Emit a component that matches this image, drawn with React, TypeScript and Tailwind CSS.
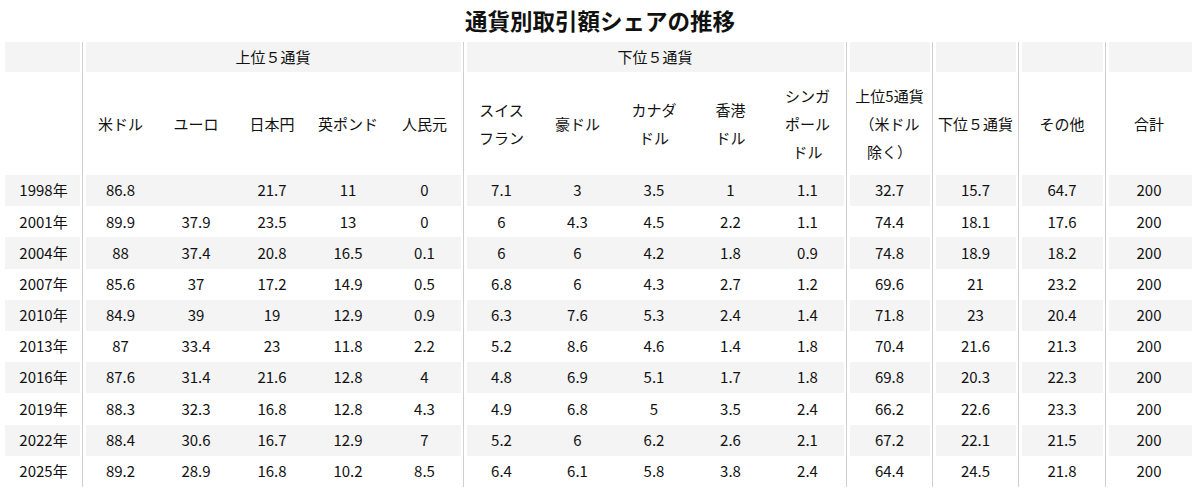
type Row = { year: string; values: string[] }

const rows: Row[] = [
  { year: "1998年", values: ["86.8", "", "21.7", "11", "0", "7.1", "3", "3.5", "1", "1.1", "32.7", "15.7", "64.7", "200"] },
  { year: "2001年", values: ["89.9", "37.9", "23.5", "13", "0", "6", "4.3", "4.5", "2.2", "1.1", "74.4", "18.1", "17.6", "200"] },
  { year: "2004年", values: ["88", "37.4", "20.8", "16.5", "0.1", "6", "6", "4.2", "1.8", "0.9", "74.8", "18.9", "18.2", "200"] },
  { year: "2007年", values: ["85.6", "37", "17.2", "14.9", "0.5", "6.8", "6", "4.3", "2.7", "1.2", "69.6", "21", "23.2", "200"] },
  { year: "2010年", values: ["84.9", "39", "19", "12.9", "0.9", "6.3", "7.6", "5.3", "2.4", "1.4", "71.8", "23", "20.4", "200"] },
  { year: "2013年", values: ["87", "33.4", "23", "11.8", "2.2", "5.2", "8.6", "4.6", "1.4", "1.8", "70.4", "21.6", "21.3", "200"] },
  { year: "2016年", values: ["87.6", "31.4", "21.6", "12.8", "4", "4.8", "6.9", "5.1", "1.7", "1.8", "69.8", "20.3", "22.3", "200"] },
  { year: "2019年", values: ["88.3", "32.3", "16.8", "12.8", "4.3", "4.9", "6.8", "5", "3.5", "2.4", "66.2", "22.6", "23.3", "200"] },
  { year: "2022年", values: ["88.4", "30.6", "16.7", "12.9", "7", "5.2", "6", "6.2", "2.6", "2.1", "67.2", "22.1", "21.5", "200"] },
  { year: "2025年", values: ["89.2", "28.9", "16.8", "10.2", "8.5", "6.4", "6.1", "5.8", "3.8", "2.4", "64.4", "24.5", "21.8", "200"] },
]

// column index (0 = year) -> whether a divider line sits on its left
const lineLeft = [false, true, false, false, false, false, true, false, false, false, false, true, true, true, true]
// column index -> whether a divider line sits on its right
const lineRight = [true, false, false, false, false, true, false, false, false, false, true, true, true, true, false]

const widths = [77, 76, 76, 76, 76, 77, 76, 77, 76, 77, 77, 86, 86, 87, 87]

function cellClass(col: number, shaded: boolean) {
  let c = "p-0 text-center"
  if (lineLeft[col]) c += " border-l border-[#cfcfcf]"
  if (shaded) {
    c += " bg-[#f4f4f4]"
    if (lineLeft[col] && lineRight[col]) c += " shadow-[inset_3px_0_0_#fff,inset_-2px_0_0_#fff]"
    else if (lineLeft[col]) c += " shadow-[inset_3px_0_0_#fff]"
    else if (lineRight[col]) c += " shadow-[inset_-2px_0_0_#fff]"
  }
  return c
}

const subHeaders: React.ReactNode[] = [
  "米ドル",
  "ユーロ",
  "日本円",
  "英ポンド",
  "人民元",
  <>スイス<br />フラン</>,
  "豪ドル",
  <>カナダ<br />ドル</>,
  <>香港<br />ドル</>,
  <>シンガ<br />ポール<br />ドル</>,
  <>上位5通貨<br />（米ドル<br />除く）</>,
  "下位５通貨",
  "その他",
  "合計",
]

export default function App() {
  return (
    <div className="w-[1200px] h-[501px] bg-white text-[#111] font-['Noto_Sans_CJK_JP','Noto_Sans',sans-serif] overflow-hidden">
      <div className="h-[42px] flex items-center justify-center text-[22.5px] font-bold">
        通貨別取引額シェアの推移
      </div>

      <table className="ml-[5px] w-[1187px] table-fixed border-separate border-spacing-0 text-[15px]">
        <colgroup>
          {widths.map((w, i) => (
            <col key={i} style={{ width: w }} />
          ))}
        </colgroup>
        <thead>
          <tr className="h-[30px]">
            <td className={cellClass(0, true)} />
            <td colSpan={5} className="p-0 text-center font-normal border-l border-[#cfcfcf] bg-[#f4f4f4] shadow-[inset_3px_0_0_#fff,inset_-2px_0_0_#fff]">
              上位５通貨
            </td>
            <td colSpan={5} className="p-0 text-center font-normal border-l border-[#cfcfcf] bg-[#f4f4f4] shadow-[inset_3px_0_0_#fff,inset_-2px_0_0_#fff]">
              下位５通貨
            </td>
            <td className={cellClass(11, true)} />
            <td className={cellClass(12, true)} />
            <td className={cellClass(13, true)} />
            <td className={cellClass(14, true)} />
          </tr>
          <tr className="h-[103px] leading-[28px]">
            <td className={cellClass(0, false)} />
            {subHeaders.map((h, i) => (
              <td key={i} className={cellClass(i + 1, false)}>
                {h}
              </td>
            ))}
          </tr>
        </thead>
        <tbody>
          {rows.map((r, ri) => {
            const shaded = ri % 2 === 0
            return (
              <tr key={r.year} className="h-[31.2px]">
                <td className={cellClass(0, shaded)}>{r.year}</td>
                {r.values.map((v, i) => (
                  <td key={i} className={cellClass(i + 1, shaded)}>
                    {v}
                  </td>
                ))}
              </tr>
            )
          })}
        </tbody>
      </table>
    </div>
  )
}
